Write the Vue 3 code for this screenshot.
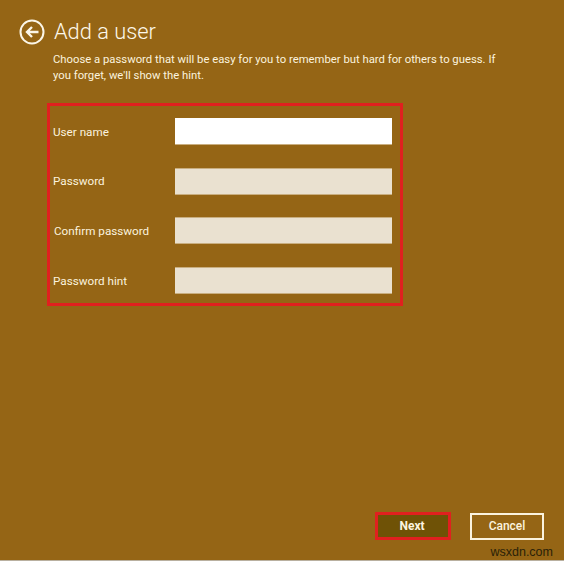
<script setup>
const fields = [
  { label: 'User name', cls: 'active' },
  { label: 'Password', cls: '' },
  { label: 'Confirm password', cls: 'shift' },
  { label: 'Password hint', cls: '' },
]
</script>

<template>
  <div class="page">
    <header class="head">
      <svg class="back" width="26" height="26" viewBox="0 0 26 26" aria-hidden="true">
        <circle cx="13" cy="13" r="11.5" fill="none" stroke="#fbf6e8" stroke-width="2" />
        <path d="M19.5 13H8.5M13 8l-5 5 5 5" fill="none" stroke="#fbf6e8" stroke-width="2.4" />
      </svg>
      <h1 class="title">Add a user</h1>
    </header>
    <p class="desc">Choose a password that will be easy for you to remember but hard for others to guess. If you forget, we'll show the hint.</p>
    <section class="form">
      <div v-for="f in fields" :key="f.label" class="row">
        <label class="label" :class="{ shift: f.cls === 'shift' }">{{ f.label }}</label>
        <div class="input" :class="{ active: f.cls === 'active' }"></div>
      </div>
    </section>
    <footer class="actions">
      <button class="btn next">Next</button>
      <button class="btn cancel">Cancel</button>
    </footer>
    <span class="mark">wsxdn.com</span>
  </div>
</template>

<style>
html, body { margin: 0; background: #956515; }
</style>

<style scoped>
.page {
  position: relative;
  box-sizing: border-box;
  width: 564px;
  height: 561px;
  overflow: hidden;
  background: #956515;
  border-bottom: 1px solid #b9b0a0;
  color: #fbf3df;
  font-family: Roboto, "Open Sans", sans-serif;
  display: flex;
  flex-direction: column;
}
.head {
  display: flex;
  align-items: center;
  gap: 9px;
  padding: 19px 0 0 19px;
  height: 26px;
}
.back { flex: none; }
.title {
  margin: 0;
  font-size: 21.8px;
  font-weight: 300;
  line-height: 26px;
  color: #fdf8ea;
}
.desc {
  margin: 7px 0 0 53px;
  width: 448px;
  font-size: 11.3px;
  line-height: 16px;
}
.form {
  box-sizing: border-box;
  width: 356px;
  height: 203px;
  margin: 19px 0 0 47px;
  border: 3px solid #e0201f;
  padding: 12px 8px 0 3px;
  display: flex;
  flex-direction: column;
  gap: 22.7px;
}
.row {
  display: flex;
  align-items: center;
  height: 27px;
  justify-content: space-between;
}
.label { font-size: 11.7px; }
.label.shift { padding-left: 1px; }
.input {
  width: 217px;
  height: 27px;
  box-sizing: border-box;
  background: #eae1d0;
  border-top: 1px solid #c9ae80;
  border-bottom: 1px solid #c9ae80;
}
.input.active { background: #fff; border-top-color: #fff; }
.actions {
  margin-top: auto;
  padding: 0 20px 20px 0;
  display: flex;
  justify-content: flex-end;
  align-items: center;
  gap: 19px;
}
.btn {
  box-sizing: border-box;
  font-family: inherit;
  font-size: 12px;
  font-weight: 500;
  color: #fbf3df;
  padding: 0;
}
.next {
  width: 76px;
  height: 28px;
  background: #6f5206;
  border: 3px solid #e0201f;
  padding-right: 2px;
  font-weight: 700;
}
.cancel {
  width: 74px;
  height: 27px;
  background: transparent;
  border: 2px solid #fbf3df;
}
.mark {
  position: absolute;
  right: 11px;
  bottom: 1px;
  font-family: "Liberation Sans", Arial, sans-serif;
  font-size: 12.5px;
  line-height: 14px;
  color: #2a2208;
}
</style>
